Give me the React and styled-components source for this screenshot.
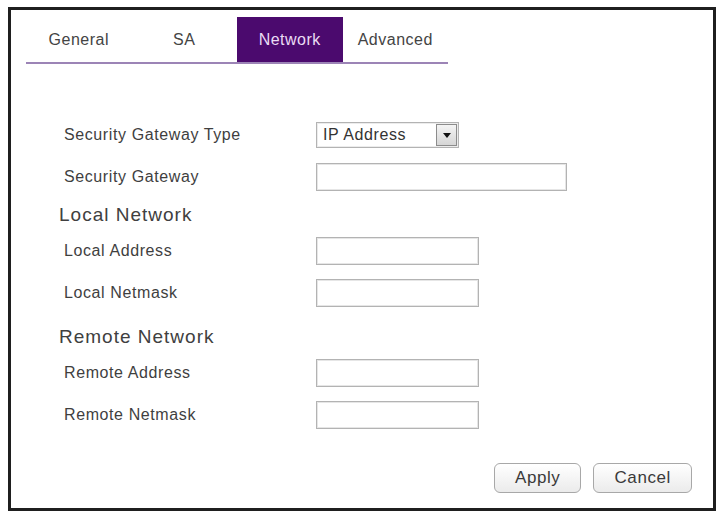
import React from "react";
import styled, { createGlobalStyle } from "styled-components";

const GlobalStyle = createGlobalStyle`
  html, body {
    margin: 0;
    padding: 0;
    background: #ffffff;
  }
  body {
    font-family: "Liberation Sans", Arial, sans-serif;
  }
`;

const tabs = ["General", "SA", "Network", "Advanced"];

const App = () => {
  return (
    <>
      <GlobalStyle />
      <Frame>
        <TabBar>
          {tabs.map(tab => (
            <Tab key={tab} $active={tab === "Network"}>
              {tab}
            </Tab>
          ))}
        </TabBar>

        <Form>
          <Row>
            <Label>Security Gateway Type</Label>
            <SelectBox>
              <span>IP Address</span>
              <DropButton>
                <Caret />
              </DropButton>
            </SelectBox>
          </Row>
          <Row>
            <Label>Security Gateway</Label>
            <TextInput $width={251} />
          </Row>

          <Heading $top={-1}>Local Network</Heading>
          <Row>
            <Label>Local Address</Label>
            <TextInput $width={163} />
          </Row>
          <Row>
            <Label>Local Netmask</Label>
            <TextInput $width={163} />
          </Row>

          <Heading $top={5}>Remote Network</Heading>
          <Row>
            <Label>Remote Address</Label>
            <TextInput $width={163} />
          </Row>
          <Row>
            <Label>Remote Netmask</Label>
            <TextInput $width={163} />
          </Row>
        </Form>

        <Actions>
          <Button>Apply</Button>
          <Button>Cancel</Button>
        </Actions>
      </Frame>
    </>
  );
};

const Frame = styled.div`
  box-sizing: border-box;
  width: 708px;
  height: 504px;
  margin: 7px 0 0 8px;
  border: 3px solid #1f1f1f;
  background: #ffffff;
  padding: 7px 21px 15px 15px;
  display: flex;
  flex-direction: column;
`;

const TabBar = styled.div`
  display: flex;
  width: 422px;
  border-bottom: 2px solid #9c84b6;
`;

const Tab = styled.div`
  flex: 1;
  height: 45px;
  display: flex;
  align-items: center;
  justify-content: center;
  font-size: 16px;
  letter-spacing: 0.5px;
  color: ${props => (props.$active ? "#eadcf4" : "#444444")};
  background: ${props => (props.$active ? "#4b0a6e" : "transparent")};
`;

const Form = styled.div`
  display: flex;
  flex-direction: column;
  margin: 57px 0 0 38px;
`;

const Row = styled.div`
  display: grid;
  grid-template-columns: 252px auto;
  align-items: center;
  height: 28px;
  margin-bottom: 14px;
`;

const Label = styled.div`
  font-size: 16px;
  letter-spacing: 0.6px;
  color: #3f3f3f;
`;

const Heading = styled.div`
  height: 22px;
  line-height: 22px;
  margin: ${props => props.$top}px 0 11px -5px;
  font-size: 19px;
  letter-spacing: 1px;
  color: #404040;
`;

const TextInput = styled.input`
  box-sizing: border-box;
  width: ${props => props.$width}px;
  height: 28px;
  margin: 0;
  padding: 0 6px;
  border: 1px solid #b3b3b3;
  box-shadow: inset 0 0 0 1px #e6e6e6;
  background: #ffffff;
  outline: none;
`;

const SelectBox = styled.div`
  box-sizing: border-box;
  width: 143px;
  height: 26px;
  display: flex;
  align-items: center;
  justify-content: space-between;
  padding: 0 1px 0 6px;
  border: 1px solid #b3b3b3;
  box-shadow: inset 0 0 0 1px #ececec;
  font-size: 16px;
  letter-spacing: 0.6px;
  color: #333333;
`;

const DropButton = styled.div`
  box-sizing: border-box;
  width: 21px;
  height: 22px;
  display: flex;
  align-items: center;
  justify-content: center;
  border: 1px solid #8c8c8c;
  background: linear-gradient(#f4f4f4, #d6d6d6);
`;

const Caret = styled.div`
  width: 0;
  height: 0;
  border-left: 4px solid transparent;
  border-right: 4px solid transparent;
  border-top: 5px solid #111111;
`;

const Actions = styled.div`
  margin-top: auto;
  display: flex;
  justify-content: flex-end;
  gap: 12px;
`;

const Button = styled.button`
  height: 30px;
  padding: 0 20px;
  border: 1px solid #a8a8a8;
  border-radius: 6px;
  background: linear-gradient(#ffffff, #ebebeb);
  font-family: "Liberation Sans", Arial, sans-serif;
  font-size: 17px;
  letter-spacing: 0.6px;
  color: #3a3a3a;
`;

export default App;
